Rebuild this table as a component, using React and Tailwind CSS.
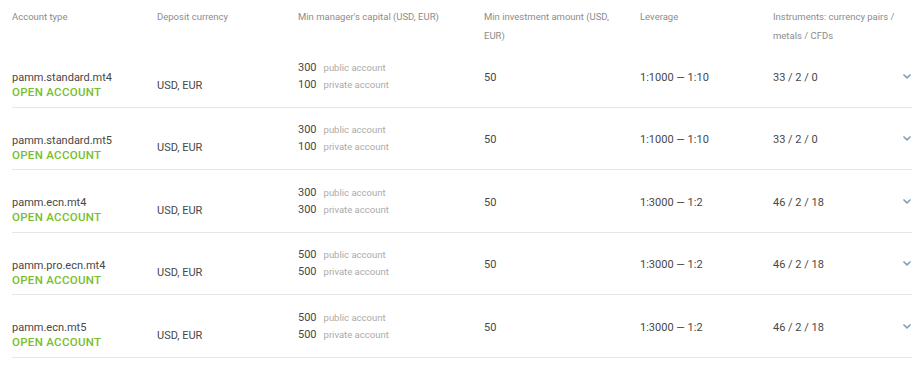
import React from "react";

const rows = [
  { name: "pamm.standard.mt4", pub: "300", priv: "100", lev: "1:1000 — 1:10", inst: "33 / 2 / 0" },
  { name: "pamm.standard.mt5", pub: "300", priv: "100", lev: "1:1000 — 1:10", inst: "33 / 2 / 0" },
  { name: "pamm.ecn.mt4", pub: "300", priv: "300", lev: "1:3000 — 1:2", inst: "46 / 2 / 18" },
  { name: "pamm.pro.ecn.mt4", pub: "500", priv: "500", lev: "1:3000 — 1:2", inst: "46 / 2 / 18" },
  { name: "pamm.ecn.mt5", pub: "500", priv: "500", lev: "1:3000 — 1:2", inst: "46 / 2 / 18" },
];

function Chevron() {
  return (
    <svg width="8" height="5" viewBox="0 0 8 5" fill="none">
      <path d="M1 1 L4 3.8 L7 1" stroke="#86a0b6" strokeWidth="1.7" strokeLinecap="round" strokeLinejoin="round" />
    </svg>
  );
}

export default function App() {
  return (
    <div className="w-[923px] h-[366px] bg-white text-[#474747] overflow-hidden" style={{ fontFamily: "Roboto, 'Liberation Sans', sans-serif" }}>
      <div className="mx-[12px] w-[900px]">
        <div className="flex h-[45px] pt-[6.5px] text-[9.5px] leading-[19px] text-[#8c8c8c]">
          <div className="w-[145px]">Account type</div>
          <div className="w-[141px]">Deposit currency</div>
          <div className="w-[186px]">Min manager's capital (USD, EUR)</div>
          <div className="w-[156px] pr-[20px]">Min investment amount (USD, EUR)</div>
          <div className="w-[133px]">Leverage</div>
          <div className="w-[128px]">Instruments: currency pairs / metals / CFDs</div>
        </div>
        {rows.map((r) => (
          <div key={r.name} className="flex items-center h-[62.5px] border-b border-[#e6e6e6] text-[11px]">
            <div className="w-[145px] pt-[19px] leading-[15px]">
              <div>{r.name}</div>
              <div className="font-medium text-[#78be2d] text-[11.5px] tracking-[0.3px]">OPEN ACCOUNT</div>
            </div>
            <div className="w-[141px] pt-[20px]">USD, EUR</div>
            <div className="w-[186px] leading-[17px]">
              <div className="flex items-center gap-[7px]">
                <span>{r.pub}</span>
                <span className="text-[9.5px] text-[#ababab]">public account</span>
              </div>
              <div className="flex items-center gap-[7px]">
                <span>{r.priv}</span>
                <span className="text-[9.5px] text-[#ababab]">private account</span>
              </div>
            </div>
            <div className="w-[156px] pt-[4px]">50</div>
            <div className="w-[133px] pt-[4px]">{r.lev}</div>
            <div className="flex-1 pt-[4px]">{r.inst}</div>
            <div className="w-[14px] flex justify-center pt-[1px] pl-[4px]">
              <Chevron />
            </div>
          </div>
        ))}
      </div>
    </div>
  );
}
